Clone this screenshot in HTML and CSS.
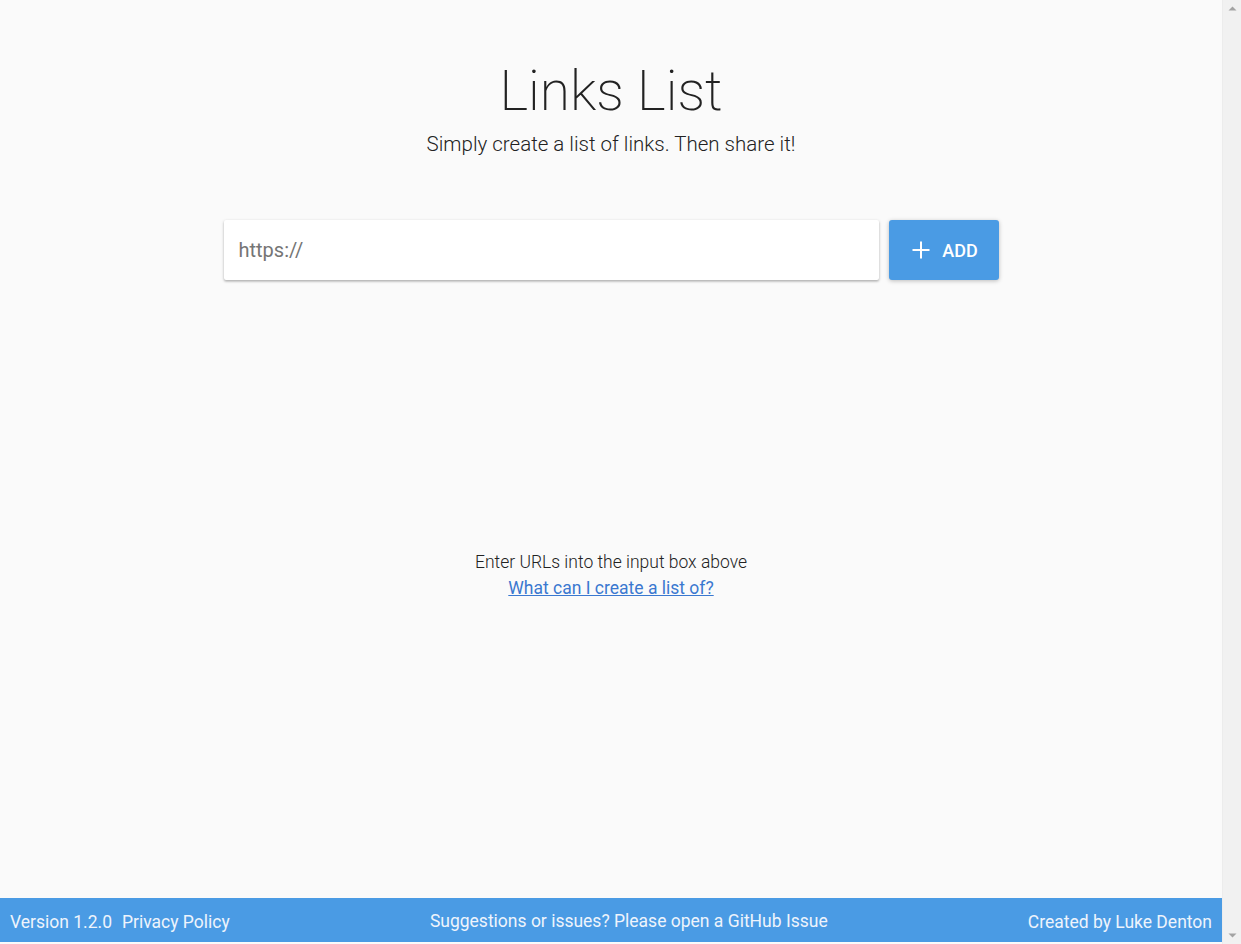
FILE: index.html
```html
<!DOCTYPE html>
<html lang="en">
<head>
<meta charset="utf-8">
<title>Links List</title>
<link rel="stylesheet" href="styles.css">
</head>
<body>
<div class="page">
  <main class="main">
    <header class="hero">
      <h1 class="title">Links List</h1>
      <p class="subtitle">Simply create a list of links. Then share it!</p>
    </header>
    <form class="add-form">
      <input class="url-input" type="text" placeholder="https://">
      <button class="add-btn" type="button">
        <svg class="plus" width="20" height="20" viewBox="0 0 20 20"><path d="M10 1.5v17M1.5 10h17" stroke="#fff" stroke-width="2" fill="none"/></svg>
        <span>ADD</span>
      </button>
    </form>
    <div class="empty">
      <p class="empty-text">Enter URLs into the input box above</p>
      <a class="empty-link" href="#">What can I create a list of?</a>
    </div>
  </main>
  <footer class="footer">
    <div class="foot-left"><span>Version 1.2.0</span><a href="#">Privacy Policy</a></div>
    <div class="foot-center"><a href="#">Suggestions or issues? Please open a GitHub Issue</a></div>
    <div class="foot-right"><a href="#">Created by Luke Denton</a></div>
  </footer>
</div>
<div class="scrollbar" aria-hidden="true">
  <svg class="sb-arrow" width="19" height="17" viewBox="0 0 19 17"><path d="M5.5 10.5h8l-4-4z" fill="#a3a3a3"/></svg>
  <svg class="sb-arrow" width="19" height="17" viewBox="0 0 19 17"><path d="M5.5 6.5h8l-4 4z" fill="#a3a3a3"/></svg>
</div>
</body>
</html>
```
FILE: styles.css
```css
html, body {
  height: 100%;
}
body {
  margin: 0;
  background: #fafafa;
  font-family: Roboto, "Liberation Sans", sans-serif;
  color: #222;
  display: flex;
  overflow: hidden;
}
.page {
  flex: 1;
  min-width: 0;
  height: calc(100vh - 2px);
  display: flex;
  flex-direction: column;
}
.scrollbar {
  width: 19px;
  flex: 0 0 19px;
  height: 100vh;
  background: #f1f1f1;
  border-left: 1px solid #ececec;
  box-sizing: border-box;
  display: flex;
  flex-direction: column;
  justify-content: space-between;
}
.sb-arrow {
  display: block;
}
.main {
  flex: 1;
  display: flex;
  flex-direction: column;
  align-items: center;
}
.hero {
  text-align: center;
  padding-top: 58px;
}
.title {
  margin: 0;
  font-size: 55px;
  font-weight: 200;
  line-height: 66px;
  color: #222;
}
.subtitle {
  margin: 3px 0 0;
  font-size: 20.5px;
  font-weight: 300;
  line-height: 34px;
  color: #222;
}
.add-form {
  margin-top: 59px;
  display: flex;
  gap: 10px;
}
.url-input {
  width: 655px;
  height: 60px;
  box-sizing: border-box;
  border: none;
  border-radius: 2px;
  background: #fff;
  padding: 0 15px;
  font-family: Roboto, "Liberation Sans", sans-serif;
  font-size: 20px;
  font-weight: 400;
  color: #333;
  box-shadow: 0 1px 3px rgba(0,0,0,0.25), 0 2px 2px rgba(0,0,0,0.1);
  outline: none;
}
.url-input::placeholder {
  color: #757575;
}
.add-btn {
  width: 110px;
  height: 60px;
  border: none;
  border-radius: 3px;
  background: #4a9be4;
  color: #fff;
  display: flex;
  align-items: center;
  justify-content: center;
  gap: 11px;
  padding: 0 0 0 2px;
  font-family: Roboto, "Liberation Sans", sans-serif;
  font-size: 18px;
  font-weight: 500;
  box-shadow: 0 1px 4px rgba(0,0,0,0.25);
}
.plus {
  display: block;
}
.empty {
  margin-top: 269px;
  text-align: center;
  font-size: 17.5px;
  font-weight: 300;
  line-height: 26px;
}
.empty-text {
  margin: 0;
  color: #222;
}
.empty-link {
  color: #3a78d0;
  font-weight: 400;
}
.footer {
  height: 44px;
  flex: 0 0 44px;
  box-sizing: border-box;
  background: #4a9be4;
  display: flex;
  align-items: center;
  justify-content: space-between;
  padding: 3px 10px 0;
  font-size: 17.5px;
  color: #eef4fc;
}
.footer a {
  color: #eef4fc;
  text-decoration: none;
}
.foot-left {
  display: flex;
  gap: 10px;
}
.foot-center {
  margin-top: -2px;
}
```
